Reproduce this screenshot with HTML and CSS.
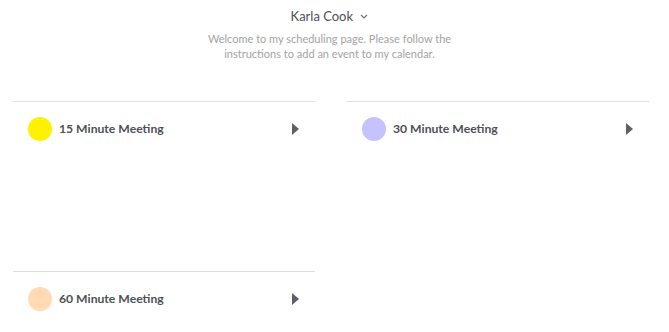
FILE: index.html
```html
<!DOCTYPE html>
<html>
	<head>
		<meta charset="UTF-8">
		<title>Karla Cook - Scheduling</title>
		<link rel="stylesheet" href="styles.css">
	</head>
	<body>
		<div class="profile">
			<div class="profile-name">Karla Cook <svg class="chevron" width="8" height="5" viewBox="0 0 8 5"><path d="M1 1l3 3 3-3" fill="none" stroke="#6b6f75" stroke-width="1.1"/></svg></div>
			<p class="profile-intro">Welcome to my scheduling page. Please follow the<br>instructions to add an event to my calendar.</p>
		</div>
		<div class="event-list">
			<div class="event-card">
				<span class="dot dot-yellow"></span>
				<span class="event-name">15 Minute Meeting</span>
				<span class="arrow"></span>
			</div>
			<div class="event-card">
				<span class="dot dot-purple"></span>
				<span class="event-name">30 Minute Meeting</span>
				<span class="arrow"></span>
			</div>
			<div class="event-card">
				<span class="dot dot-peach"></span>
				<span class="event-name">60 Minute Meeting</span>
				<span class="arrow"></span>
			</div>
		</div>
	</body>
</html>
```
FILE: styles.css
```css
*{margin:0;padding:0;}
html,body{overflow:hidden;}
body{
	background:#fff;
	font-family:Lato, "Open Sans", sans-serif;
	color:#4d5055;
}
.profile{
	text-align:center;
	padding-top:7px;
	margin-left:-10px;
}
.profile-name{
	font-size:13px;
	line-height:18px;
	color:#4d5055;
}
.chevron{
	margin-left:4px;
	vertical-align:2px;
}
.profile-intro{
	margin-top:6px;
	font-size:11px;
	line-height:15px;
	color:#a3a3a3;
}
.event-list{
	display:grid;
	grid-template-columns:302px 302px;
	column-gap:32px;
	margin:40px 0 0 13px;
}
.event-card{
	height:170px;
	border-top:1px solid #dedede;
	display:flex;
	align-items:flex-start;
	padding:15px 16px 0 15px;
	box-sizing:border-box;
}
.dot{
	width:24px;
	height:24px;
	border-radius:50%;
	flex:none;
}
.dot-yellow{background:#fff200;}
.dot-purple{background:#c5c2ff;}
.dot-peach{background:#ffdab5;}
.event-name{
	margin-left:7px;
	flex:1;
	font-size:12.2px;
	font-weight:bold;
	line-height:24px;
	color:#4d5055;
}
.arrow{
	margin-top:6px;
	width:0;
	height:0;
	border-top:6px solid transparent;
	border-bottom:6px solid transparent;
	border-left:7px solid #5d6066;
}
```
